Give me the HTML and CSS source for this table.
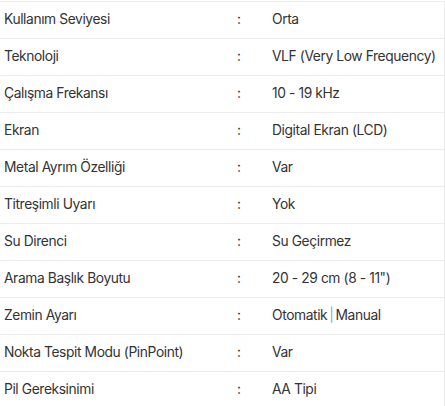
FILE: index.html
```html
<!DOCTYPE html>
<html lang="tr">
<head>
<meta charset="utf-8">
<link rel="stylesheet" href="styles.css">
</head>
<body>
<div class="specs">
  <div class="row"><div class="label">Kullanım Seviyesi</div><div class="colon">:</div><div class="value">Orta</div></div>
  <div class="row"><div class="label">Teknoloji</div><div class="colon">:</div><div class="value">VLF (Very Low Frequency)</div></div>
  <div class="row"><div class="label">Çalışma Frekansı</div><div class="colon">:</div><div class="value">10 - 19 kHz</div></div>
  <div class="row"><div class="label">Ekran</div><div class="colon">:</div><div class="value">Digital Ekran (LCD)</div></div>
  <div class="row"><div class="label">Metal Ayrım Özelliği</div><div class="colon">:</div><div class="value">Var</div></div>
  <div class="row"><div class="label">Titreşimli Uyarı</div><div class="colon">:</div><div class="value">Yok</div></div>
  <div class="row"><div class="label">Su Direnci</div><div class="colon">:</div><div class="value">Su Geçirmez</div></div>
  <div class="row"><div class="label">Arama Başlık Boyutu</div><div class="colon">:</div><div class="value">20 - 29 cm (8 - 11")</div></div>
  <div class="row"><div class="label">Zemin Ayarı</div><div class="colon">:</div><div class="value">Otomatik<span class="sep">|</span>Manual</div></div>
  <div class="row"><div class="label">Nokta Tespit Modu (PinPoint)</div><div class="colon">:</div><div class="value">Var</div></div>
  <div class="row"><div class="label">Pil Gereksinimi</div><div class="colon">:</div><div class="value">AA Tipi</div></div>
</div>
</body>
</html>
```
FILE: styles.css
```css
html, body {
  margin: 0;
  padding: 0;
  background: #fff;
}
body {
  font-family: Inter, "Noto Sans", sans-serif;
  font-size: 13.8px;
  letter-spacing: -0.4px;
  color: #333;
  padding-top: 1px;
}
.specs {
  width: 444px;
  border-right: 1px solid #ececec;
}
.row {
  display: grid;
  grid-template-columns: 234px 38px 1fr;
  height: 34px;
  padding-bottom: 2px;
  align-items: center;
  border-top: 1px solid #ececec;
  white-space: nowrap;
}
.label {
  padding-left: 4px;
}
.colon {
  padding-left: 3px;
}
.sep {
  color: #7fa8d0;
  margin: 0 2px;
}
```
